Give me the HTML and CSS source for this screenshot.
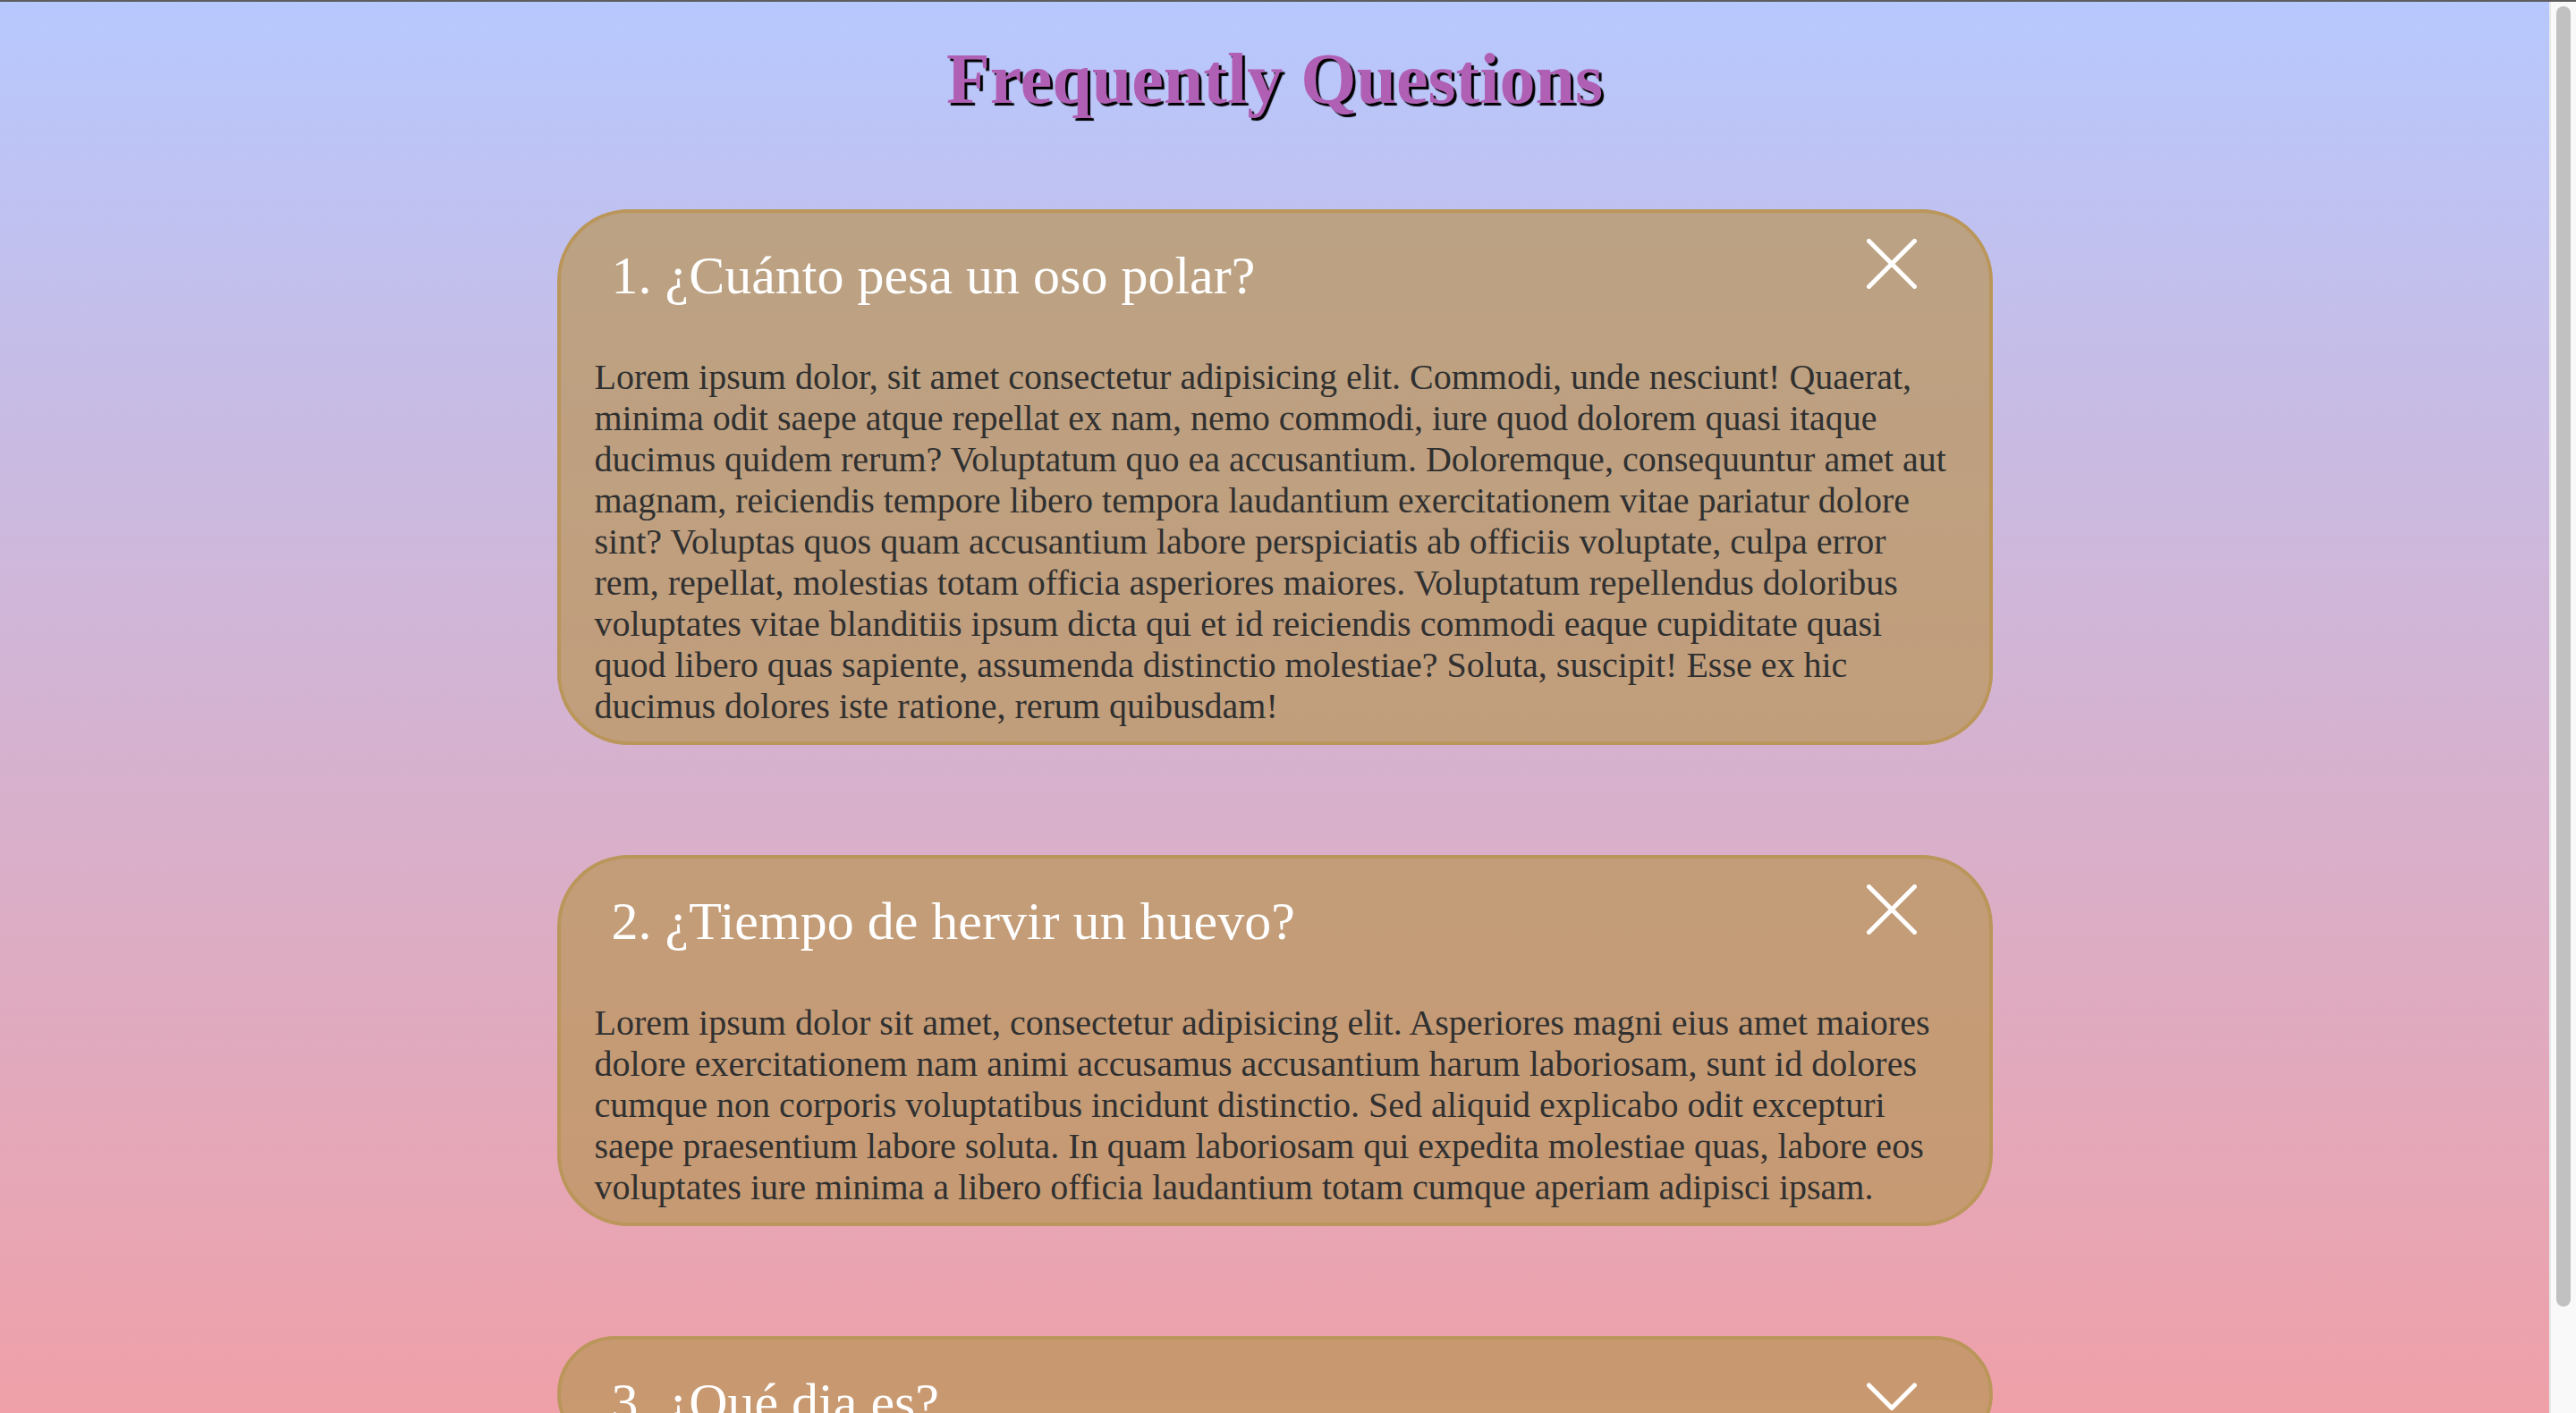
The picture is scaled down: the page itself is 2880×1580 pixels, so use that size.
FILE: index.html
```html
<!DOCTYPE html>
<html lang="es">
<head>
<meta charset="utf-8">
<title>Frequently Questions</title>
<link rel="stylesheet" href="styles.css">
</head>
<body>
<div class="topline"></div>
<div class="frame">
  <main class="page">
    <h1 class="title">Frequently Questions</h1>

    <section class="card">
      <div class="card-head">
        <h2 class="question">1. ¿Cuánto pesa un oso polar?</h2>
        <svg class="icon" viewBox="0 0 56 56" width="56" height="56" aria-hidden="true">
          <line x1="2.5" y1="2.5" x2="53.5" y2="53.5"/>
          <line x1="53.5" y1="2.5" x2="2.5" y2="53.5"/>
        </svg>
      </div>
      <p class="answer">Lorem ipsum dolor, sit amet consectetur adipisicing elit. Commodi, unde nesciunt! Quaerat, minima odit saepe atque repellat ex nam, nemo commodi, iure quod dolorem quasi itaque ducimus quidem rerum? Voluptatum quo ea accusantium. Doloremque, consequuntur amet aut magnam, reiciendis tempore libero tempora laudantium exercitationem vitae pariatur dolore sint? Voluptas quos quam accusantium labore perspiciatis ab officiis voluptate, culpa error rem, repellat, molestias totam officia asperiores maiores. Voluptatum repellendus doloribus voluptates vitae blanditiis ipsum dicta qui et id reiciendis commodi eaque cupiditate quasi quod libero quas sapiente, assumenda distinctio molestiae? Soluta, suscipit! Esse ex hic ducimus dolores iste ratione, rerum quibusdam!</p>
    </section>

    <section class="card">
      <div class="card-head">
        <h2 class="question">2. ¿Tiempo de hervir un huevo?</h2>
        <svg class="icon" viewBox="0 0 56 56" width="56" height="56" aria-hidden="true">
          <line x1="2.5" y1="2.5" x2="53.5" y2="53.5"/>
          <line x1="53.5" y1="2.5" x2="2.5" y2="53.5"/>
        </svg>
      </div>
      <p class="answer">Lorem ipsum dolor sit amet, consectetur adipisicing elit. Asperiores magni eius amet maiores dolore exercitationem nam animi accusamus accusantium harum laboriosam, sunt id dolores cumque non corporis voluptatibus incidunt distinctio. Sed aliquid explicabo odit excepturi saepe praesentium labore soluta. In quam laboriosam qui expedita molestiae quas, labore eos voluptates iure minima a libero officia laudantium totam cumque aperiam adipisci ipsam.</p>
    </section>

    <section class="card">
      <div class="card-head">
        <h2 class="question">3. ¿Qué dia es?</h2>
        <svg class="icon" viewBox="0 0 56 56" width="56" height="56" aria-hidden="true">
          <polyline points="2.5,22 28,47.5 53.5,22"/>
        </svg>
      </div>
    </section>
  </main>
  <aside class="scrollbar"><div class="thumb"></div></aside>
</div>
</body>
</html>
```

FILE: styles.css
```css
html, body {
  margin: 0;
  padding: 0;
}

body {
  height: 1580px;
  overflow: hidden;
  display: flex;
  flex-direction: column;
  font-family: "Liberation Serif", "Times New Roman", serif;
}

.topline {
  height: 2px;
  flex-shrink: 0;
  background: #5f5c60;
}

.frame {
  flex: 1;
  display: flex;
  min-height: 0;
}

.page {
  flex: 1;
  min-width: 0;
  overflow: hidden;
  background: linear-gradient(to bottom, #b7c8fe 0%, #d5b2d0 52%, #efa0a8 100%);
}

.title {
  margin: 40px 0 100px;
  text-align: center;
  font-size: 80px;
  line-height: 92px;
  font-weight: bold;
  color: #b060b4;
  text-shadow: 3px 3px 1px #000;
}

.card {
  box-sizing: border-box;
  width: 1605px;
  margin: 0 auto 123px;
  border: 4px solid rgb(186, 150, 90);
  border-radius: 80px;
  background: rgba(186, 150, 90, 0.72);
  padding-bottom: 16.5px;
}

.card-head {
  display: flex;
  justify-content: space-between;
  align-items: flex-start;
  padding: 29px 81px 0 57px;
}

.question {
  margin: 6.5px 0 0;
  font-size: 60px;
  line-height: 69px;
  font-weight: normal;
  color: #ffffff;
}

.icon {
  flex-shrink: 0;
  display: block;
  fill: none;
  stroke: #ffffff;
  stroke-width: 5;
  stroke-linecap: round;
  stroke-linejoin: round;
}

.answer {
  margin: 56px 0 0;
  padding: 0 40px 0 38px;
  font-size: 40px;
  line-height: 46px;
  color: #303030;
}

.scrollbar {
  width: 30px;
  flex-shrink: 0;
  box-sizing: border-box;
  background: #f9f9f9;
  border-left: 2px solid #e8e8e8;
  padding: 5px 6px 0 6px;
}

.thumb {
  height: 1454px;
  border-radius: 8px;
  background: #c1c1c1;
}
```
